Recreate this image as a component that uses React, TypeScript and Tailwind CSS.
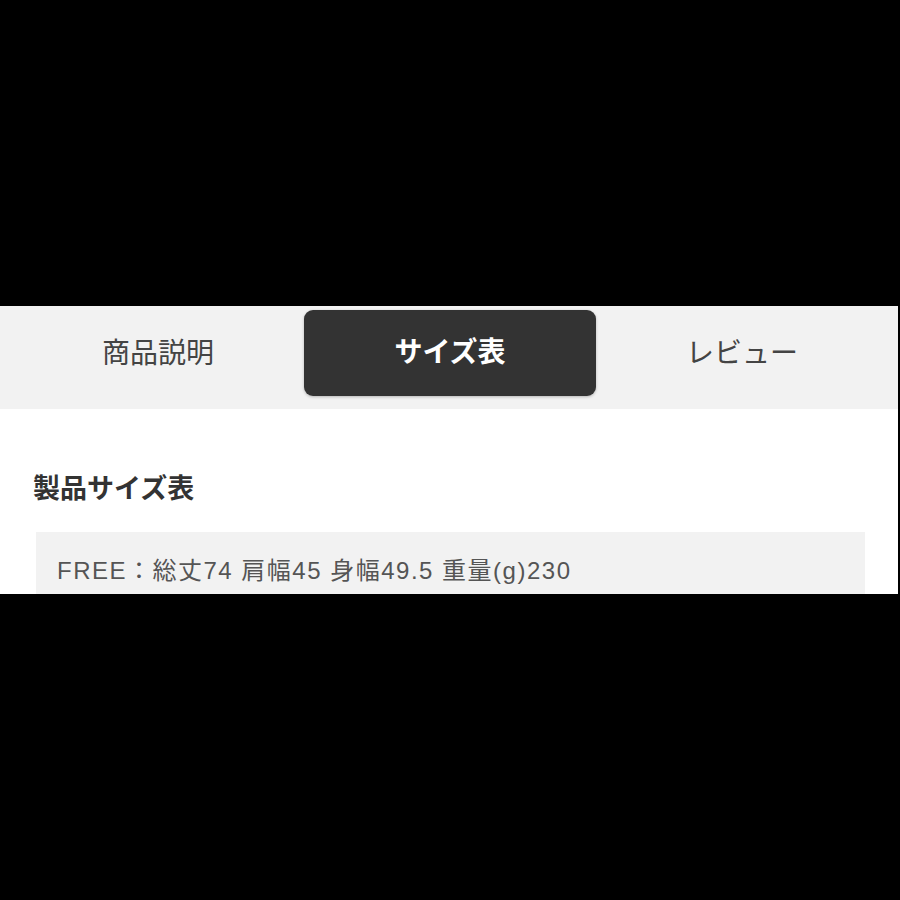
const tabs = ["商品説明", "サイズ表", "レビュー"];

export default function App() {
  return (
    <div
      className="w-[900px] h-[900px] bg-black pt-[306px]"
      style={{ fontFamily: '"Liberation Sans", "Noto Sans CJK JP", sans-serif' }}
    >
      <div className="w-[898px] h-[288px] overflow-hidden bg-white">
        <div className="flex bg-[#f2f2f2] pl-[12px] pr-[10px] pt-[4px] pb-[13px]">
          {tabs.map((t, i) =>
            i === 1 ? (
              <div
                key={t}
                className="w-[292px] h-[86px] flex items-center justify-center rounded-[9px] bg-[#333333] text-white text-[28px] font-bold shadow-[0_1px_3px_rgba(0,0,0,0.25)]"
              >
                {t}
              </div>
            ) : (
              <div
                key={t}
                className="w-[292px] h-[86px] flex items-center justify-center text-[#444444] text-[28px] pt-[2px]"
              >
                {t}
              </div>
            )
          )}
        </div>
        <div className="pl-[33px] pr-[33px] pt-[62px]">
          <h2 className="text-[27px] font-bold text-[#333333] leading-[36px]">製品サイズ表</h2>
          <div className="mt-[25px] ml-[3px] bg-[#f2f2f2] px-[21px] pt-[23px] pb-[30px]">
            <p className="text-[24px] text-[#555555] leading-[32px] whitespace-nowrap tracking-[1.5px]">
              FREE：総丈74 肩幅45 身幅49.5 重量(g)230
            </p>
          </div>
        </div>
      </div>
    </div>
  );
}
